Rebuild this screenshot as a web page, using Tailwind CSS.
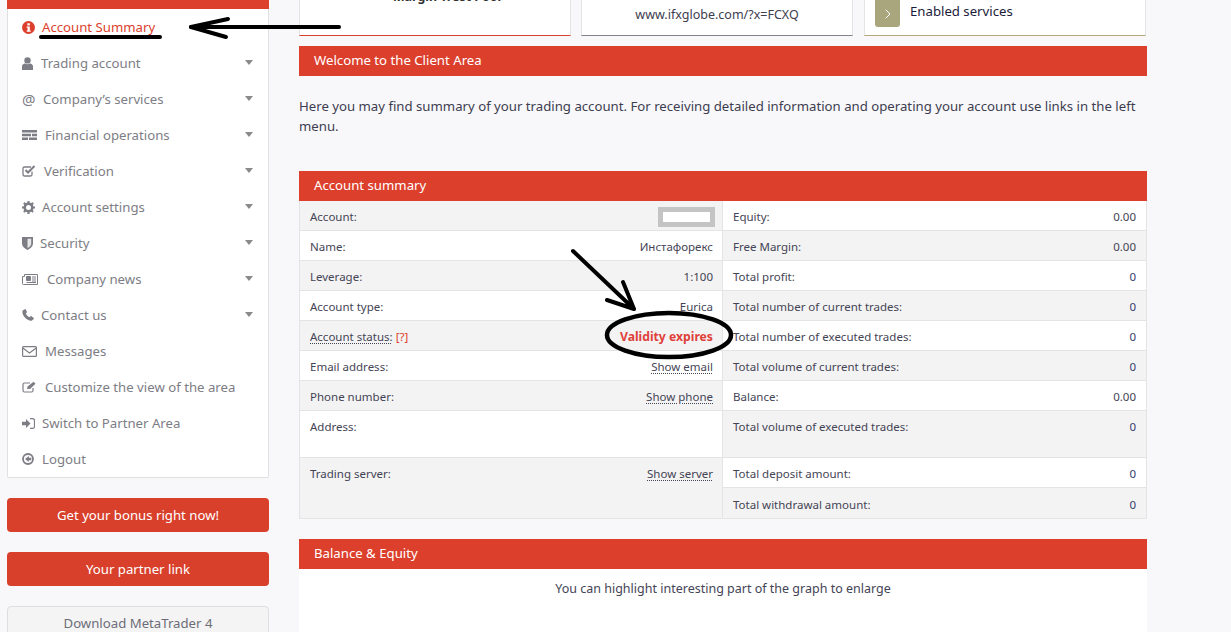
<!DOCTYPE html>
<html lang="en">
<head>
    <meta charset="UTF-8">
    <title>Client Area</title>
    <script src="https://cdn.jsdelivr.net/npm/@tailwindcss/browser@4"></script>
</head>
<body class="relative h-[632px] overflow-hidden bg-[#f8f8fb] font-['Noto_Sans',sans-serif] text-[11.5px] text-[#444455]">
<div class="flex items-start pl-[7px]">

    <!-- Sidebar -->
    <aside class="w-[262px] shrink-0 text-[13.2px]">
        <nav class="bg-white border-x border-b border-[#e0e0e0] rounded-b-[2px] text-[#7d7d85]">
            <div class="h-[9px] bg-[#dc3f2c] -mx-px"></div>
            <a class="flex items-center h-9 pl-[14px] pr-[15px] text-[#dc3f2c]">
                <svg class="w-[13px] h-[13px]" viewBox="0 0 14 14"><circle cx="7" cy="7" r="7" fill="#dc3f2c"/><rect x="5.8" y="2.4" width="2.6" height="2.4" fill="#fff"/><path d="M5 6h3.400v4.200h1v1.400H5v-1.400h1V7.400H5z" fill="#fff"/></svg>
                <span class="ml-[7px] pt-[2px]">Account Summary</span>
            </a>
            <a class="flex items-center h-9 pl-[14px] pr-[15px]">
                <svg class="w-[11px] h-[13px]" viewBox="0 0 11 13" fill="#7d7d85"><circle cx="5.5" cy="3.4" r="3.2"/><path d="M0 13V9.500C0 7.600 1.400 6.600 3 6.400c1.500 1 3.500 1 5 0 1.600.2 3 1.200 3 3.100V13z"/></svg>
                <span class="ml-[8px] pt-[2px]">Trading account</span>
                <svg class="ml-auto mb-[2px] w-2 h-[5px]" viewBox="0 0 8 5" fill="#8a8a8a"><path d="M0 0h8L4 5z"/></svg>
            </a>
            <a class="flex items-center h-9 pl-[14px] pr-[15px]">
                <span class="w-[13px] text-[15px] leading-none">@</span>
                <span class="ml-[8px] pt-[2px]">Company’s services</span>
                <svg class="ml-auto mb-[2px] w-2 h-[5px]" viewBox="0 0 8 5" fill="#8a8a8a"><path d="M0 0h8L4 5z"/></svg>
            </a>
            <a class="flex items-center h-9 pl-[14px] pr-[15px]">
                <svg class="w-[15px] h-[10px]" viewBox="0 0 15 10" fill="#7d7d85"><path d="M0 0h15v2.500H0zM0 3.700h9v2.600H0zM10 3.700h5v2.600h-5zM0 7.500h6V10H0zM7 7.500h8V10H7z"/></svg>
                <span class="ml-[8px] pt-[2px]">Financial operations</span>
                <svg class="ml-auto mb-[2px] w-2 h-[5px]" viewBox="0 0 8 5" fill="#8a8a8a"><path d="M0 0h8L4 5z"/></svg>
            </a>
            <a class="flex items-center h-9 pl-[14px] pr-[15px]">
                <svg class="w-[14px] h-[12px]" viewBox="0 0 14 12" fill="none" stroke="#7d7d85"><path d="M10 6.500V9.500a1.500 1.500 0 0 1-1.500 1.500H2.500A1.500 1.500 0 0 1 1 9.500v-6A1.500 1.500 0 0 1 2.500 2H9" stroke-width="1.300"/><path d="M3.500 5l2.500 2.500L12.500 1" stroke-width="2"/></svg>
                <span class="ml-[8px] pt-[2px]">Verification</span>
                <svg class="ml-auto mb-[2px] w-2 h-[5px]" viewBox="0 0 8 5" fill="#8a8a8a"><path d="M0 0h8L4 5z"/></svg>
            </a>
            <a class="flex items-center h-9 pl-[14px] pr-[15px]">
                <svg class="w-[13px] h-[13px]" viewBox="0 0 13 13"><circle cx="6.500" cy="6.500" r="3.800" fill="none" stroke="#7d7d85" stroke-width="2.600"/><path d="M6.500 0v13M0 6.500h13M1.900 1.900l9.200 9.200M11.100 1.900l-9.200 9.200" stroke="#7d7d85" stroke-width="2.200" stroke-dasharray="2.200 8.600"/></svg>
                <span class="ml-[7px] pt-[2px]">Account settings</span>
                <svg class="ml-auto mb-[2px] w-2 h-[5px]" viewBox="0 0 8 5" fill="#8a8a8a"><path d="M0 0h8L4 5z"/></svg>
            </a>
            <a class="flex items-center h-9 pl-[14px] pr-[15px]">
                <svg class="w-[11px] h-[13px]" viewBox="0 0 11 13"><path d="M0 0h11v6.500c0 3-2.500 5-5.500 6.500C2.500 11.500 0 9.500 0 6.500z" fill="#7d7d85"/><path d="M5.500 1.800h3.700v4.700c0 2-1.700 3.500-3.700 4.600z" fill="#e6e6e6"/></svg>
                <span class="ml-[7px] pt-[2px]">Security</span>
                <svg class="ml-auto mb-[2px] w-2 h-[5px]" viewBox="0 0 8 5" fill="#8a8a8a"><path d="M0 0h8L4 5z"/></svg>
            </a>
            <a class="flex items-center h-9 pl-[14px] pr-[15px]">
                <svg class="w-4 h-[11px]" viewBox="0 0 16 11" fill="none" stroke="#7d7d85"><path d="M2.500.5h13v10H1.500a1 1 0 0 1-1-1V2.500h2z"/><path d="M4.500 2.500h4v4h-4z" fill="#7d7d85"/><path d="M10 3h4M10 5h4M10 7h4M4.500 8.500h9.500"/></svg>
                <span class="ml-[9px] pt-[2px]">Company news</span>
                <svg class="ml-auto mb-[2px] w-2 h-[5px]" viewBox="0 0 8 5" fill="#8a8a8a"><path d="M0 0h8L4 5z"/></svg>
            </a>
            <a class="flex items-center h-9 pl-[14px] pr-[15px]">
                <svg class="w-3 h-3" viewBox="0 0 12 12" fill="#7d7d85"><path d="M2.800.2.700 1.500C-.2 3 .8 6 2.700 8.300c2 2.400 5 3.900 7 3.500l2-1.800c.3-.3.300-.7 0-1L9.500 7.200c-.3-.2-.7-.2-1 0L7.300 8.300C6 7.800 4.300 6 3.800 4.600l1-1.200c.2-.3.200-.6 0-.9L3.700.4C3.500.1 3.100 0 2.800.2z"/></svg>
                <span class="ml-[7px] pt-[2px]">Contact us</span>
                <svg class="ml-auto mb-[2px] w-2 h-[5px]" viewBox="0 0 8 5" fill="#8a8a8a"><path d="M0 0h8L4 5z"/></svg>
            </a>
            <a class="flex items-center h-9 pl-[14px] pr-[15px]">
                <svg class="w-[15px] h-[11px]" viewBox="0 0 15 11" fill="none" stroke="#7d7d85" stroke-width="1.200"><rect x=".6" y=".6" width="13.800" height="9.800" rx="1"/><path d="M.8 2l6.700 5 6.700-5"/></svg>
                <span class="ml-[8px] pt-[2px]">Messages</span>
            </a>
            <a class="flex items-center h-9 pl-[14px] pr-[15px]">
                <svg class="w-[15px] h-[12px]" viewBox="0 0 15 12" fill="none" stroke="#7d7d85"><path d="M11 7v2.500A1.500 1.500 0 0 1 9.500 11h-7A1.500 1.500 0 0 1 1 9.500v-6A1.500 1.500 0 0 1 2.500 2H8" stroke-width="1.200"/><path d="M5 8l.6-2.500L11.500.8l2 2L8 8z" fill="#7d7d85" stroke="none"/></svg>
                <span class="ml-[8px] pt-[2px]">Customize the view of the area</span>
            </a>
            <a class="flex items-center h-9 pl-[14px] pr-[15px]">
                <svg class="w-[13px] h-[11px]" viewBox="0 0 13 11" fill="#7d7d85"><path d="M0 3.800h4V1l4.500 4.500L4 10V7.200H0z"/><path d="M8 .6h2.700A2 2 0 0 1 12.500 2.600v5.800a2 2 0 0 1-1.800 2H8" fill="none" stroke="#7d7d85" stroke-width="1.200"/></svg>
                <span class="ml-[7px] pt-[2px]">Switch to Partner Area</span>
            </a>
            <a class="flex items-center h-9 pl-[14px] pr-[15px]">
                <svg class="w-3 h-3" viewBox="0 0 12 12"><circle cx="6" cy="6" r="5" fill="none" stroke="#7d7d85" stroke-width="1.800"/><path d="M6.800 3v1.800H9.300v2.400H6.800V9L3 6z" fill="#7d7d85"/></svg>
                <span class="ml-[8px] pt-[2px]">Logout</span>
            </a>
        </nav>

        <a class="mt-5 pt-[2px] flex items-center justify-center h-[34px] rounded-[4px] bg-[#d8402c] text-white">Get your bonus right now!</a>
        <a class="mt-5 pt-[2px] flex items-center justify-center h-[34px] rounded-[4px] bg-[#d8402c] text-white">Your partner link</a>
        <a class="mt-5 pt-[2px] flex items-center justify-center h-[34px] rounded-[4px] border border-[#dedede] bg-[#f4f4f4] text-[#6d6d78]">Download MetaTrader 4</a>
    </aside>

    <!-- Main -->
    <main class="ml-[30px] w-[848px] shrink-0">
        <div class="grid grid-cols-[272px_272px_283px] gap-x-[10px] h-9">
            <div class="bg-white border-x border-[#e4e4e4] border-b border-b-[#dc3f2c] overflow-hidden text-center font-bold leading-none text-[#333] text-[12.4px] pl-6">
                <div class="-mt-[9px]">Margin Trest Pool</div>
            </div>
            <div class="bg-white border-x border-[#e4e4e4] border-b border-b-[#86808a] text-center pt-[6px] text-[#3d3d4f] text-[12.5px]">www.ifxglobe.com/?x=FCXQ</div>
            <div class="ml-px flex items-start bg-white border-x border-[#e4e4e4] border-b border-b-[#b5a878] pl-[10px]">
                <div class="flex items-center justify-center w-[25px] h-[27px] rounded-b-[3px] bg-[#a9a57c]">
                    <svg class="w-[6px] h-[10px]" viewBox="0 0 6 10" fill="none" stroke="#fff"><path d="M.7.7 5 5 .7 9.300"/></svg>
                </div>
                <span class="ml-[10px] pt-[2px] text-[#1c1c3a] text-[13.2px]">Enabled services</span>
            </div>
        </div>

        <h2 class="mt-[10px] h-[30px] pl-[15px] flex items-center bg-[#dc3f2c] text-white text-[13.2px]">Welcome to the Client Area</h2>
        <p class="mt-5 leading-5 text-[#3d3d4f] text-[13.2px]">Here you may find summary of your trading account. For receiving detailed information and operating your account use links in the left menu.</p>

        <h2 class="mt-[35px] h-[30px] pl-[15px] flex items-center bg-[#dc3f2c] text-white text-[13.2px]">Account summary</h2>
        <div class="grid grid-cols-2 border-x border-b border-[#e4e4e4] w-[848px]">
            <div class="border-r border-[#e4e4e4]">
                <div class="flex justify-between items-center h-[30px] pt-[3px] pl-[10px] pr-[9px] border-b border-[#e4e4e4] bg-[#f3f3f3]"><span>Account:</span>
                    <span class="w-[57px] h-[20px] -mr-[2px] border-[5px] border-[#c4c4c4] bg-white"></span></div>
                <div class="flex justify-between items-center h-[30px] pt-[3px] pl-[10px] pr-[9px] border-b border-[#e4e4e4] bg-white"><span>Name:</span><span>Инстафорекс</span></div>
                <div class="flex justify-between items-center h-[30px] pt-[3px] pl-[10px] pr-[9px] border-b border-[#e4e4e4] bg-[#f3f3f3]"><span>Leverage:</span><span>1:100</span></div>
                <div class="flex justify-between items-center h-[30px] pt-[3px] pl-[10px] pr-[9px] border-b border-[#e4e4e4] bg-white"><span>Account type:</span><span>Eurica</span></div>
                <div class="flex justify-between items-center h-[30px] pt-[3px] pl-[10px] pr-[9px] border-b border-[#e4e4e4] bg-[#f3f3f3]"><span><span class="underline decoration-dotted underline-offset-2">Account status:</span> <span class="text-[#dc3f2c]">[?]</span></span><span class="font-bold text-[12.2px] text-[#e0403a]">Validity expires</span></div>
                <div class="flex justify-between items-center h-[30px] pt-[3px] pl-[10px] pr-[9px] border-b border-[#e4e4e4] bg-white"><span>Email address:</span><span class="underline decoration-dotted underline-offset-2">Show email</span></div>
                <div class="flex justify-between items-center h-[30px] pt-[3px] pl-[10px] pr-[9px] border-b border-[#e4e4e4] bg-[#f3f3f3]"><span>Phone number:</span><span class="underline decoration-dotted underline-offset-2">Show phone</span></div>
                <div class="flex justify-between items-start h-[47px] pt-[7px] pl-[10px] pr-[9px] border-b border-[#e4e4e4] bg-white"><span>Address:</span></div>
                <div class="flex justify-between items-start h-[60px] pt-[7px] pl-[10px] pr-[9px] bg-[#f3f3f3]"><span>Trading server:</span><span class="underline decoration-dotted underline-offset-2">Show server</span></div>
            </div>
            <div>
                <div class="flex justify-between items-center h-[30px] pt-[3px] px-[10px] border-b border-[#e4e4e4] bg-white"><span>Equity:</span><span>0.00</span></div>
                <div class="flex justify-between items-center h-[30px] pt-[3px] px-[10px] border-b border-[#e4e4e4] bg-[#f3f3f3]"><span>Free Margin:</span><span>0.00</span></div>
                <div class="flex justify-between items-center h-[30px] pt-[3px] px-[10px] border-b border-[#e4e4e4] bg-white"><span>Total profit:</span><span class="text-[#33406f]">0</span></div>
                <div class="flex justify-between items-center h-[30px] pt-[3px] px-[10px] border-b border-[#e4e4e4] bg-[#f3f3f3]"><span>Total number of current trades:</span><span class="text-[#33406f]">0</span></div>
                <div class="flex justify-between items-center h-[30px] pt-[3px] px-[10px] border-b border-[#e4e4e4] bg-white"><span>Total number of executed trades:</span><span class="text-[#33406f]">0</span></div>
                <div class="flex justify-between items-center h-[30px] pt-[3px] px-[10px] border-b border-[#e4e4e4] bg-[#f3f3f3]"><span>Total volume of current trades:</span><span class="text-[#33406f]">0</span></div>
                <div class="flex justify-between items-center h-[30px] pt-[3px] px-[10px] border-b border-[#e4e4e4] bg-white"><span>Balance:</span><span>0.00</span></div>
                <div class="flex justify-between items-start h-[47px] pt-[7px] px-[10px] border-b border-[#e4e4e4] bg-[#f3f3f3]"><span>Total volume of executed trades:</span><span class="text-[#33406f]">0</span></div>
                <div class="flex justify-between items-center h-[30px] pt-[3px] px-[10px] border-b border-[#e4e4e4] bg-white"><span>Total deposit amount:</span><span class="text-[#33406f]">0</span></div>
                <div class="flex justify-between items-center h-[30px] pt-[3px] px-[10px] bg-[#f3f3f3]"><span>Total withdrawal amount:</span><span class="text-[#33406f]">0</span></div>
            </div>
        </div>

        <h2 class="mt-5 h-[30px] pl-[15px] flex items-center bg-[#dc3f2c] text-white text-[13.2px]">Balance &amp; Equity</h2>
        <div class="bg-white h-[80px] pt-[11px] text-center text-[12.5px]">You can highlight interesting part of the graph to enlarge</div>
    </main>
</div>

<!-- hand-drawn marks on top of the screenshot -->
<svg class="absolute inset-0 w-[1231px] h-[632px] pointer-events-none" viewBox="0 0 1231 632" fill="none" stroke="#000" stroke-linecap="round" stroke-linejoin="round">
    <path d="M41 37H160" stroke-width="4"/>
    <path d="M339 27H191" stroke-width="4"/>
    <path d="M228 19 191 27 226 37" stroke-width="4"/>
    <path d="M573 251 634 309M623 282 634 309M607 300 634 309" stroke-width="4"/>
    <ellipse cx="669" cy="335" rx="62" ry="22" stroke-width="4.500"/>
</svg>
</body>
</html>
